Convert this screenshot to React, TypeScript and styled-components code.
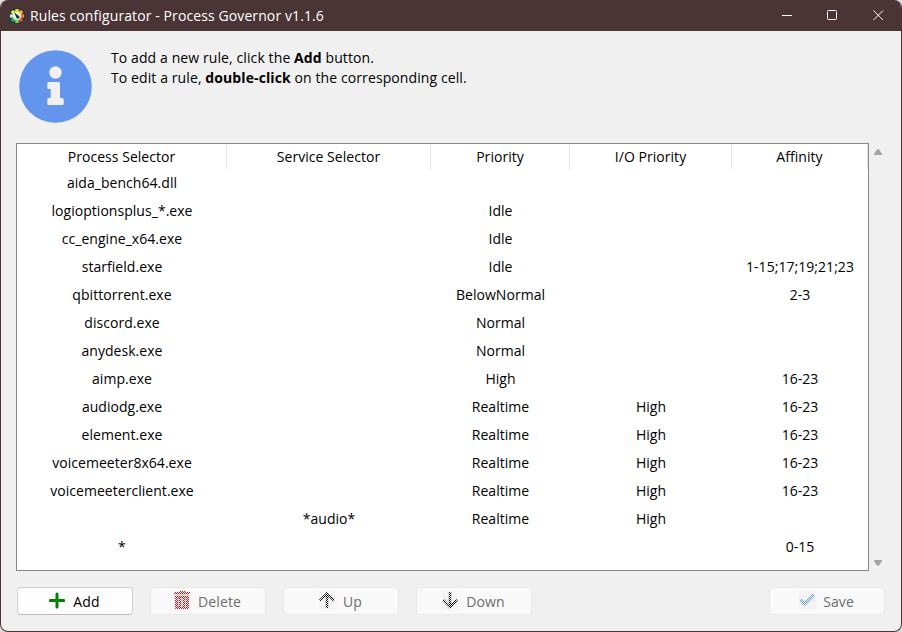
import React from "react";
import styled, { createGlobalStyle } from "styled-components";

const GlobalStyle = createGlobalStyle`
  * { box-sizing: border-box; }
  body {
    margin: 0;
    background: #dcdcdc;
    font-family: "Open Sans", "Noto Sans", sans-serif;
    font-size: 14px;
    color: #000;
  }
`;

const Window = styled.div`
  width: 902px;
  height: 632px;
  display: flex;
  flex-direction: column;
  background: #f0f0f0;
  border: 1px solid #4a3436;
  border-top: 0;
  border-radius: 8px;
  overflow: hidden;
`;

const TitleBar = styled.header`
  height: 31px;
  flex: none;
  display: flex;
  align-items: center;
  padding-left: 8px;
  background: #4a3436;
  color: #fff;
`;

const Title = styled.h1`
  flex: 1;
  margin: 0 0 0 5px;
  font-size: 14px;
  line-height: 20px;
  font-weight: 400;
  letter-spacing: 0.1px;
`;

const Caption = styled.div`
  width: 45.5px;
  height: 30px;
  display: flex;
  align-items: center;
  justify-content: center;
`;

const Intro = styled.section`
  height: 112px;
  flex: none;
  display: flex;
  padding: 19px 0 0 18px;
  gap: 19px;
`;

const IntroText = styled.p`
  margin: -2px 0 0;
  line-height: 20px;
  letter-spacing: 0.1px;
`;

const TableArea = styled.div`
  height: 428px;
  flex: none;
  display: flex;
  padding-left: 15px;
`;

const Grid = styled.div`
  width: 853px;
  border: 1px solid #828790;
  background: #fff;
`;

const Row = styled.div<{ $head?: boolean }>`
  display: grid;
  grid-template-columns: 210px 204px 139px 162px 136px;
  height: ${(p) => (p.$head ? 25 : 28)}px;
  line-height: ${(p) => (p.$head ? 25 : 28)}px;
`;

const Cell = styled.div<{ $head?: boolean }>`
  text-align: center;
  white-space: nowrap;
  letter-spacing: 0.04px;
  border-right: ${(p) => (p.$head ? "1px solid #e5e5e5" : "0")};
`;

const ScrollBar = styled.div`
  width: 17px;
  display: flex;
  flex-direction: column;
  justify-content: space-between;
  align-items: center;
  padding: 6px 0 5px;
`;

const Footer = styled.footer`
  display: flex;
  gap: 17px;
  padding: 16px 16px 0;
`;

const Button = styled.button<{ $end?: boolean }>`
  width: 116px;
  height: 28px;
  display: flex;
  align-items: center;
  justify-content: center;
  gap: 8px;
  padding: 0 1px 1px 0;
  margin-left: ${(p) => (p.$end ? "auto" : "0")};
  font: inherit;
  letter-spacing: 0.1px;
  color: #000;
  background: #fdfdfd;
  border: 1px solid #d0d0d0;
  border-bottom-color: #bcbcbc;
  border-radius: 4px;
  &:disabled {
    color: #6d6d6d;
    background: #f9f9f9;
    border-color: #e8e8e8;
  }
  svg { flex: none; }
`;

const ButtonLabel = styled.span`
  padding-top: 1px;
`;

const gearColors = ["#ffd21f", "#ffb020", "#ff7a2a", "#f2502f", "#8ccf3c", "#36b34a", "#bfe8cf", "#f4e63a"];

const AppIcon = () => (
  <svg width="16" height="16" viewBox="0 0 16 16">
    <circle cx="8" cy="8" r="7.9" fill="#083f50" />
    {gearColors.map((c, i) => (
      <rect key={c} x="6.2" y="0.9" width="3.6" height="4.2" rx="0.6" fill={c} transform={`rotate(${i * 45} 8 8)`} />
    ))}
    <circle cx="8" cy="8" r="3.9" fill="#fbf8e8" />
    <path d="M5 4.3 9.4 7.4a1.7 1.7 0 0 1-.4 3.3 1.7 1.7 0 0 1-1.9-1.6Z" fill="#083f50" />
  </svg>
);

const InfoIcon = () => (
  <svg width="73" height="73" viewBox="0 0 73 73">
    <circle cx="36.5" cy="36.5" r="36.3" fill="#6495ed" />
    <circle cx="36.5" cy="22.5" r="6.2" fill="#f0f0f0" />
    <path
      d="M29.8 32H39.4Q41 32 41 33.6V48H43Q44.7 48 44.7 49.6V53.5Q44.7 55 43 55H29.8Q28.2 55 28.2 53.5V49.6Q28.2 48 29.8 48H31.7V39H29.8Q28.2 39 28.2 37.4V33.6Q28.2 32 29.8 32Z"
      fill="#f0f0f0"
    />
  </svg>
);

type DisabledIconProps = { name: string; backing?: string; children: React.ReactNode };

/* Disabled icons use the classic one-pixel checkerboard stipple. */
const StippledIcon = ({ name, backing = "#f0f0f0", children }: DisabledIconProps) => (
  <svg width="16" height="19" viewBox="0 0 16 19">
    <defs>
      <pattern id={`${name}-dots`} width="2" height="2" patternUnits="userSpaceOnUse">
        <path d="M0 0h1v1H0zM1 1h1v1H1z" fill="#fff" shapeRendering="crispEdges" />
      </pattern>
      <mask id={`${name}-mask`} maskUnits="userSpaceOnUse" x="0" y="0" width="16" height="19">
        <rect width="16" height="19" fill={`url(#${name}-dots)`} />
      </mask>
    </defs>
    <g mask={`url(#${name}-mask)`}>
      <rect width="16" height="19" fill={backing} />
      {children}
    </g>
  </svg>
);

const PlusIcon = () => (
  <svg width="16" height="17" viewBox="0 0 16 17">
    <path d="M8 2v13M1.3 8.5h13.4" stroke="#008000" strokeWidth="3" strokeLinecap="round" />
  </svg>
);

const TrashIcon = () => (
  <StippledIcon name="trash" backing="none">
    <path d="M0 1h5V0h6v1h5v2H0z" fill="#ff0000" />
    <path d="M1 3h14v14q0 1-1 1H2q-1 0-1-1z" fill="#ff9c9c" />
    <path
      fillRule="evenodd"
      d="M1 5h14v12q0 1-1 1H2q-1 0-1-1zM4 7v9h1V7zM7 7v9h2V7zM11 7v9h1V7z"
      fill="#ff0000"
    />
  </StippledIcon>
);

const UpIcon = () => (
  <StippledIcon name="up">
    <path d="M8 17V3M1 9.7 8 2.5l7 7.2" fill="none" stroke="#000" strokeWidth="2.5" />
  </StippledIcon>
);

const DownIcon = () => (
  <StippledIcon name="down">
    <path d="M8 1v14M1 8.8 8 16l7-7.2" fill="none" stroke="#000" strokeWidth="2.5" />
  </StippledIcon>
);

const CheckIcon = () => (
  <StippledIcon name="check">
    <path d="M1 8.5 5.6 13.2 15 3.7" fill="none" stroke="#6495ed" strokeWidth="3.2" />
  </StippledIcon>
);

const columns = ["Process Selector", "Service Selector", "Priority", "I/O Priority", "Affinity"];

const rules = [
  ["aida_bench64.dll", "", "", "", ""],
  ["logioptionsplus_*.exe", "", "Idle", "", ""],
  ["cc_engine_x64.exe", "", "Idle", "", ""],
  ["starfield.exe", "", "Idle", "", "1-15;17;19;21;23"],
  ["qbittorrent.exe", "", "BelowNormal", "", "2-3"],
  ["discord.exe", "", "Normal", "", ""],
  ["anydesk.exe", "", "Normal", "", ""],
  ["aimp.exe", "", "High", "", "16-23"],
  ["audiodg.exe", "", "Realtime", "High", "16-23"],
  ["element.exe", "", "Realtime", "High", "16-23"],
  ["voicemeeter8x64.exe", "", "Realtime", "High", "16-23"],
  ["voicemeeterclient.exe", "", "Realtime", "High", "16-23"],
  ["", "*audio*", "Realtime", "High", ""],
  ["*", "", "", "", "0-15"],
];

export default function App() {
  return (
    <>
      <GlobalStyle />
      <Window>
        <TitleBar>
          <AppIcon />
          <Title>Rules configurator - Process Governor v1.1.6</Title>
          <Caption>
            <svg width="11" height="11"><path d="M0 5.5h10" stroke="#fff" /></svg>
          </Caption>
          <Caption>
            <svg width="11" height="11"><rect x=".5" y=".5" width="9" height="9" rx="1" fill="none" stroke="#fff" /></svg>
          </Caption>
          <Caption>
            <svg width="11" height="11"><path d="m.5.5 9.5 9.5M10 .5.5 10" stroke="#fff" /></svg>
          </Caption>
        </TitleBar>
        <Intro>
          <InfoIcon />
          <IntroText>
            To add a new rule, click the <b>Add</b> button.
            <br />
            To edit a rule, <b>double-click</b> on the corresponding cell.
          </IntroText>
        </Intro>
        <TableArea>
          <Grid>
            <Row $head>
              {columns.map((c) => <Cell $head key={c}>{c}</Cell>)}
            </Row>
            {rules.map((r, i) => (
              <Row key={i}>
                {r.map((v, j) => <Cell key={j}>{v}</Cell>)}
              </Row>
            ))}
          </Grid>
          <ScrollBar>
            <svg width="8" height="6"><path d="M0 6V5L3 .5Q4-.4 5 .5L8 5v1z" fill="#a3a3a3" /></svg>
            <svg width="8" height="6"><path d="M0 0v1l3 4.5q1 .9 2 0L8 1V0z" fill="#a3a3a3" /></svg>
          </ScrollBar>
        </TableArea>
        <Footer>
          <Button><PlusIcon /><ButtonLabel>Add</ButtonLabel></Button>
          <Button disabled><TrashIcon /><ButtonLabel>Delete</ButtonLabel></Button>
          <Button disabled><UpIcon /><ButtonLabel>Up</ButtonLabel></Button>
          <Button disabled><DownIcon /><ButtonLabel>Down</ButtonLabel></Button>
          <Button disabled $end><CheckIcon /><ButtonLabel>Save</ButtonLabel></Button>
        </Footer>
      </Window>
    </>
  );
}
